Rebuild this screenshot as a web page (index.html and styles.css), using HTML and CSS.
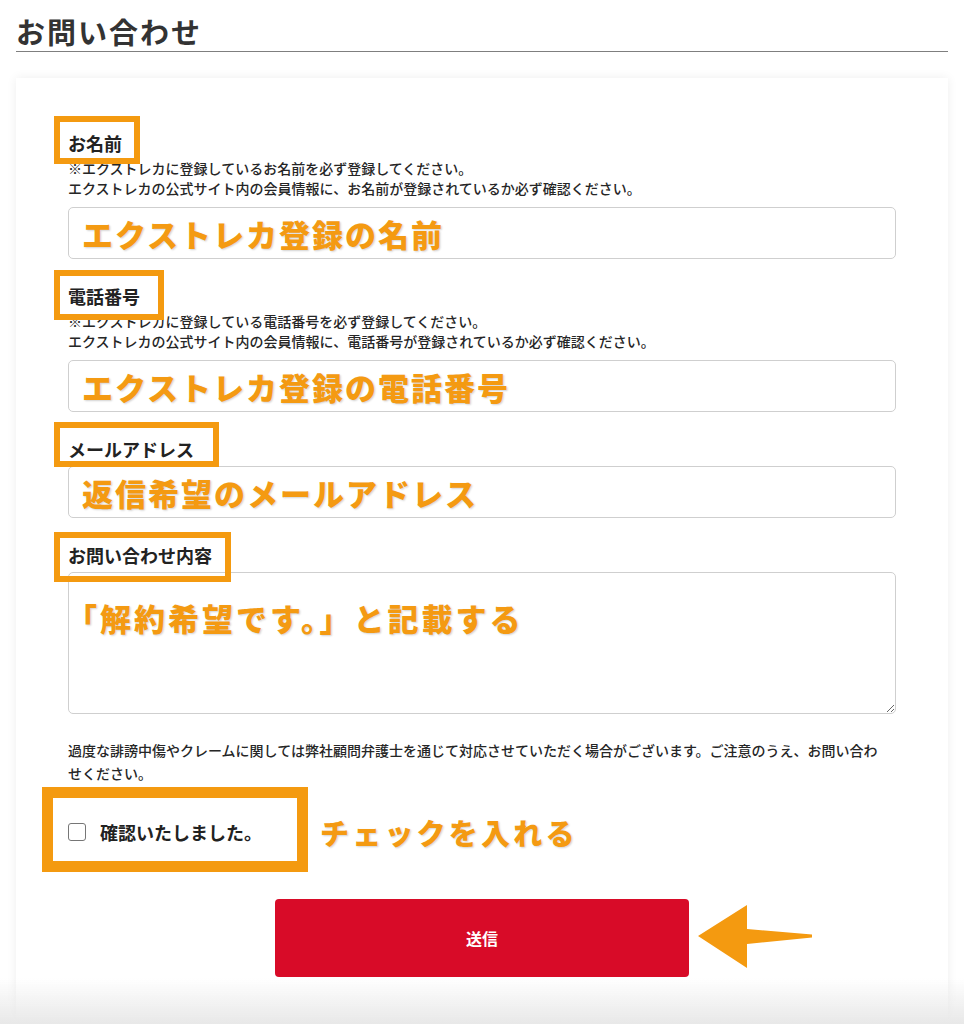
FILE: index.html
```html
<!DOCTYPE html>
<html lang="ja">
<head>
<meta charset="utf-8">
<title>お問い合わせ</title>
<link rel="stylesheet" href="styles.css">
</head>
<body>
<div class="page">
  <h1 class="title">お問い合わせ</h1>
  <form class="card">
    <div class="field">
      <span class="mark mark-name"></span>
      <div class="label">お名前</div>
      <p class="note">※エクストレカに登録しているお名前を必ず登録してください。<br>エクストレカの公式サイト内の会員情報に、お名前が登録されているか必ず確認ください。</p>
      <input class="input" type="text" value="エクストレカ登録の名前">
    </div>
    <div class="field">
      <span class="mark mark-tel"></span>
      <div class="label">電話番号</div>
      <p class="note">※エクストレカに登録している電話番号を必ず登録してください。<br>エクストレカの公式サイト内の会員情報に、電話番号が登録されているか必ず確認ください。</p>
      <input class="input" type="text" value="エクストレカ登録の電話番号">
    </div>
    <div class="field">
      <span class="mark mark-mail"></span>
      <div class="label">メールアドレス</div>
      <input class="input" type="text" value="返信希望のメールアドレス">
    </div>
    <div class="field">
      <span class="mark mark-body"></span>
      <div class="label">お問い合わせ内容</div>
      <textarea class="textarea">「解約希望です。」と記載する</textarea>
    </div>
    <p class="disclaimer">過度な誹謗中傷やクレームに関しては弊社顧問弁護士を通じて対応させていただく場合がございます。ご注意のうえ、お問い合わせください。</p>
    <div class="check-row">
      <span class="mark mark-check"></span>
      <input class="checkbox" type="checkbox" id="agree">
      <label class="check-label" for="agree">確認いたしました。</label>
      <span class="check-note">チェックを入れる</span>
    </div>
    <div class="actions">
      <button class="submit" type="button">送信</button>
      <svg class="arrow" width="114" height="63" viewBox="0 0 114 63" aria-hidden="true">
        <polygon points="0,31 49,0 49,24 114,29.5 114,32.5 49,39 49,63" fill="#f49a10"/>
      </svg>
    </div>
  </form>
</div>
<div class="bottom-fade"></div>
</body>
</html>
```

FILE: styles.css
```css
* { box-sizing: border-box; }
html, body { margin: 0; padding: 0; background: #fff; }
body {
  font-family: "Noto Sans CJK JP", "Noto Sans", sans-serif;
  color: #222;
}
.page { padding: 0 16px; }
.title {
  margin: 0;
  padding-top: 11px;
  font-size: 29px;
  line-height: 40px;
  letter-spacing: 2px;
  font-weight: 700;
  color: #333;
  border-bottom: 1px solid #7f7f7f;
}
.card {
  margin-top: 26px;
  background: #fff;
  box-shadow: 0 0 10px rgba(0, 0, 0, 0.07);
  padding: 54px 52px 120px;
}
.field { position: relative; }
.field + .field { margin-top: 26px; }
.label {
  font-size: 18px;
  line-height: 22px;
  padding-bottom: 4px;
  font-weight: 700;
  color: #222;
}
.note {
  margin: 0 0 9px;
  font-size: 14px;
  line-height: 20px;
  font-weight: 500;
  color: #262626;
}
.input, .textarea {
  display: block;
  width: 100%;
  margin: 2px 0 0;
  border: 1px solid #cfcfcf;
  border-radius: 5px;
  background: #fff;
  font-family: "Noto Sans CJK JP", sans-serif;
  font-size: 31px;
  font-weight: 900;
  letter-spacing: 2px;
  color: #f49a12;
  text-shadow: 1px 1px 2px rgba(0, 0, 0, 0.18);
  outline: none;
}
.input {
  height: 52px;
  padding: 0 13px;
}
.textarea {
  height: 142px;
  padding: 25px 13px 0 14px;
  line-height: 40px;
  letter-spacing: 3px;
  text-indent: -17px;
  resize: vertical;
}
.mark {
  position: absolute;
  border: 6px solid #f49a10;
  z-index: 2;
  pointer-events: none;
}
.mark-name { left: -14px; top: -16px; width: 86px; height: 48px; }
.mark-tel { left: -14px; top: -15px; width: 110px; height: 50px; }
.mark-mail { left: -14px; top: -16px; width: 165px; height: 45px; }
.mark-body { left: -14px; top: -12px; width: 177px; height: 50px; }
.disclaimer {
  margin: 25px 0 0;
  padding-right: 8px;
  font-size: 14px;
  line-height: 23px;
  font-weight: 500;
  color: #262626;
}
.check-row {
  position: relative;
  margin-top: 34px;
  height: 26px;
  display: flex;
  align-items: center;
}
.mark-check {
  left: -26px;
  top: -32px;
  width: 266px;
  height: 85px;
  border-width: 11px;
}
.checkbox {
  appearance: none;
  -webkit-appearance: none;
  margin: 0;
  width: 18px;
  height: 18px;
  border: 1.5px solid #767676;
  border-radius: 3px;
  background: #fff;
}
.check-label {
  margin-left: 14px;
  font-size: 18px;
  font-weight: 700;
  line-height: 26px;
  color: #222;
}
.check-note {
  margin-left: 58px;
  font-size: 29px;
  font-weight: 900;
  letter-spacing: 3.2px;
  line-height: 26px;
  color: #f49a12;
  text-shadow: 1px 1px 2px rgba(0, 0, 0, 0.18);
}
.actions {
  position: relative;
  margin-top: 54px;
  display: flex;
  justify-content: center;
}
.submit {
  width: 414px;
  height: 78px;
  border: none;
  border-radius: 4px;
  background: #d80b28;
  color: #fff;
  font-family: "Noto Sans CJK JP", sans-serif;
  font-size: 16px;
  font-weight: 700;
}
.arrow {
  position: absolute;
  left: 630px;
  top: 6px;
}
.bottom-fade {
  position: fixed;
  left: 0;
  right: 0;
  bottom: 0;
  height: 46px;
  background: linear-gradient(to bottom, rgba(236, 236, 236, 0), rgba(232, 232, 232, 1));
  pointer-events: none;
}
```
